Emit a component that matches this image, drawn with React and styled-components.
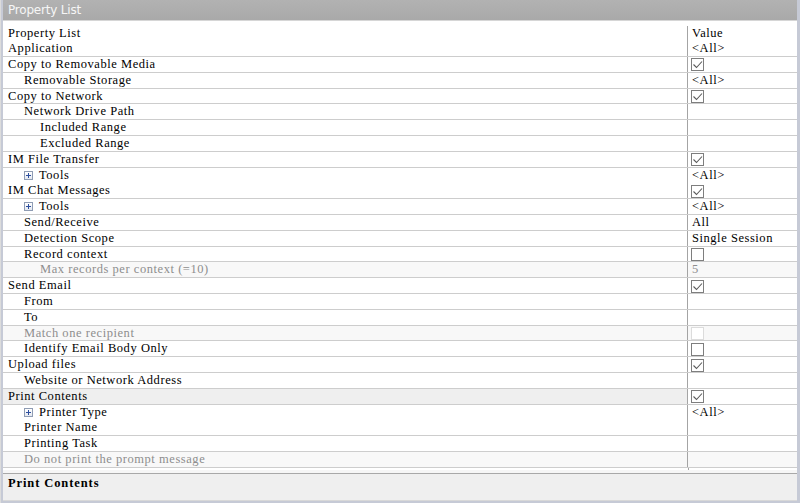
import React from 'react';
import styled, { createGlobalStyle } from 'styled-components';

const GlobalStyle = createGlobalStyle`
  html, body {
    margin: 0;
    padding: 0;
    background: #c6cad6;
  }
  * {
    box-sizing: border-box;
  }
`;

const ROW_H = 15.8;
const CELL_FONT = `"Liberation Serif", "Times New Roman", serif`;

const Window = styled.div`
  width: 800px;
  height: 503px;
  display: flex;
  flex-direction: column;
  padding: 0 3px 2px 2px;
  background: #c6cad6;
  border-left: 1px solid #dcdcdc;
  overflow: hidden;
`;

const TitleBar = styled.div`
  height: 21px;
  flex: none;
  padding-left: 5px;
  line-height: 20px;
  background: linear-gradient(#b2b2b2, #a9a9a9);
  color: #f6f6f6;
  font-family: "DejaVu Sans", "Liberation Sans", sans-serif;
  font-size: 12px;
  letter-spacing: -0.2px;
  border-bottom: 1px solid #d6d6d6;
`;

const Sheet = styled.div`
  flex: none;
  height: 449px;
  padding-top: 4.5px;
  background: #fff;
  display: flex;
  flex-direction: column;
`;

const Row = styled.div`
  display: grid;
  grid-template-columns: 685px 1fr;
  height: ${ROW_H}px;
  flex: none;
  border-bottom: ${({ $header }) => ($header ? 'none' : '1px solid #cdcdcd')};
  font-family: ${CELL_FONT};
  font-size: 12.5px;
  letter-spacing: 0.55px;
  color: #000;
`;

const NameCell = styled.div`
  display: flex;
  align-items: center;
  padding-left: ${({ $level }) => 5 + $level * 16}px;
  border-right: 1px solid #a4a4a4;
  white-space: nowrap;
  overflow: hidden;
  background: ${({ $selected, $disabled }) =>
    $selected ? '#efefef' : $disabled ? '#f8f8f8' : '#fff'};
  color: ${({ $disabled }) => ($disabled ? '#8e8e8e' : '#000')};
`;

const ValueCell = styled.div`
  display: flex;
  align-items: center;
  padding-left: 4px;
  white-space: nowrap;
  background: ${({ $disabled }) => ($disabled ? '#f8f8f8' : '#fff')};
  color: ${({ $disabled }) => ($disabled ? '#8e8e8e' : '#000')};
`;

const Filler = styled.div`
  flex: 1;
  width: 686px;
  border-right: 1px solid #a4a4a4;
  max-height: 2px;
`;

const Expander = styled.span`
  width: 9px;
  height: 9px;
  flex: none;
  margin-right: 6px;
  border: 1px solid #8f9cb3;
  background: linear-gradient(#ffffff, #e4e8f0);
  display: inline-flex;
  align-items: center;
  justify-content: center;
`;

const Box = styled.span`
  width: 13px;
  height: 13px;
  flex: none;
  margin-left: -1px;
  margin-top: 1px;
  border: 1px solid ${({ $disabled }) => ($disabled ? '#dcdcdc' : '#7e7e7e')};
  background: #fff;
  display: inline-flex;
  align-items: center;
  justify-content: center;
`;

const Splitter = styled.div`
  flex: none;
  height: 4px;
  background: #f6f6f6;
  border-bottom: 1px solid #a8a8a8;
`;

const Description = styled.div`
  flex: 1;
  background: #efefef;
  padding: 2px 5px;
  font-family: ${CELL_FONT};
  font-size: 12.5px;
  font-weight: bold;
  letter-spacing: 0.9px;
  color: #000;
  border-bottom: 1px solid #d8d8d8;
`;

const Plus = () => (
  <Expander>
    <svg width="7" height="7" viewBox="0 0 7 7">
      <path d="M3.5 1v5M1 3.5h5" stroke="#2d4f9e" strokeWidth="1" />
    </svg>
  </Expander>
);

const CheckBox = ({ checked, disabled }) => (
  <Box $disabled={disabled}>
    {checked && (
      <svg width="11" height="11" viewBox="0 0 11 11">
        <path d="M1.5 5.5l3 3 5.5-6" fill="none" stroke="#5a5a5a" strokeWidth="1.1" />
      </svg>
    )}
  </Box>
);

const rows = [
  { name: 'Application', value: '<All>' },
  { name: 'Copy to Removable Media', check: true },
  { name: 'Removable Storage', level: 1, value: '<All>' },
  { name: 'Copy to Network', check: true },
  { name: 'Network Drive Path', level: 1 },
  { name: 'Included Range', level: 2 },
  { name: 'Excluded Range', level: 2 },
  { name: 'IM File Transfer', check: true },
  { name: 'Tools', level: 1, expand: true, value: '<All>' },
  { name: 'IM Chat Messages', check: true },
  { name: 'Tools', level: 1, expand: true, value: '<All>' },
  { name: 'Send/Receive', level: 1, value: 'All' },
  { name: 'Detection Scope', level: 1, value: 'Single Session' },
  { name: 'Record context', level: 1, check: false },
  { name: 'Max records per context (=10)', level: 2, value: '5', disabled: true },
  { name: 'Send Email', check: true },
  { name: 'From', level: 1 },
  { name: 'To', level: 1 },
  { name: 'Match one recipient', level: 1, check: false, disabled: true },
  { name: 'Identify Email Body Only', level: 1, check: false },
  { name: 'Upload files', check: true },
  { name: 'Website or Network Address', level: 1 },
  { name: 'Print Contents', check: true, selected: true },
  { name: 'Printer Type', level: 1, expand: true, value: '<All>' },
  { name: 'Printer Name', level: 1 },
  { name: 'Printing Task', level: 1 },
  { name: 'Do not print the prompt message', level: 1, disabled: true },
];

const App = () => (
  <>
    <GlobalStyle />
    <Window>
      <TitleBar>Property List</TitleBar>
      <Sheet>
        <Row $header>
          <NameCell $level={0}>Property List</NameCell>
          <ValueCell>Value</ValueCell>
        </Row>
        {rows.map((r, i) => (
          <Row key={i}>
            <NameCell $level={r.level || 0} $selected={r.selected} $disabled={r.disabled}>
              {r.expand && <Plus />}
              {r.name}
            </NameCell>
            <ValueCell $disabled={r.disabled}>
              {r.check !== undefined ? <CheckBox checked={r.check} disabled={r.disabled} /> : r.value}
            </ValueCell>
          </Row>
        ))}
        <Filler />
      </Sheet>
      <Splitter />
      <Description>Print Contents</Description>
    </Window>
  </>
);

export default App;
